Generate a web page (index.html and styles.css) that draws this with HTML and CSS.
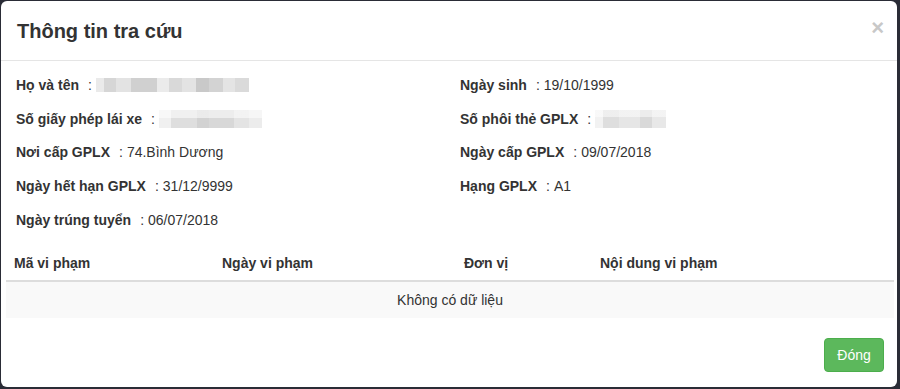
FILE: index.html
```html
<!DOCTYPE html>
<html lang="vi">
<head>
<meta charset="utf-8">
<title>Thông tin tra cứu</title>
<link rel="stylesheet" href="styles.css">
</head>
<body>
<div class="modal">
  <div class="modal-header">
    <h4 class="modal-title">Thông tin tra cứu</h4>
    <span class="close">×</span>
  </div>
  <div class="modal-body">
    <div class="info-grid">
      <div class="info-row"><b>Họ và tên</b><span class="sep">:</span><span class="blur blur-name"></span></div>
      <div class="info-row"><b>Ngày sinh</b><span class="sep">:</span><span class="val">19/10/1999</span></div>
      <div class="info-row"><b>Số giấy phép lái xe</b><span class="sep">:</span><span class="blur blur-gplx"></span></div>
      <div class="info-row"><b>Số phôi thẻ GPLX</b><span class="sep">:</span><span class="blur blur-phoi"></span></div>
      <div class="info-row"><b>Nơi cấp GPLX</b><span class="sep">:</span><span class="val">74.Bình Dương</span></div>
      <div class="info-row"><b>Ngày cấp GPLX</b><span class="sep">:</span><span class="val">09/07/2018</span></div>
      <div class="info-row"><b>Ngày hết hạn GPLX</b><span class="sep">:</span><span class="val">31/12/9999</span></div>
      <div class="info-row"><b>Hạng GPLX</b><span class="sep">:</span><span class="val">A1</span></div>
      <div class="info-row"><b>Ngày trúng tuyển</b><span class="sep">:</span><span class="val">06/07/2018</span></div>
    </div>
    <table class="table">
      <colgroup>
        <col class="c1"><col class="c2"><col class="c3"><col class="c4">
      </colgroup>
      <thead>
        <tr><th>Mã vi phạm</th><th>Ngày vi phạm</th><th>Đơn vị</th><th>Nội dung vi phạm</th></tr>
      </thead>
      <tbody>
        <tr><td colspan="4" class="empty">Không có dữ liệu</td></tr>
      </tbody>
    </table>
  </div>
  <div class="modal-footer">
    <button class="btn-success">Đóng</button>
  </div>
</div>
</body>
</html>
```
FILE: styles.css
```css
html, body {
  margin: 0;
  padding: 0;
}
body {
  background: #2a2c36;
  font-family: "Liberation Sans", Arial, sans-serif;
  color: #333;
  font-size: 14px;
  height: 389px;
  overflow: hidden;
}
.modal {
  margin: 1px 4px 0 1px;
  width: 896px;
  height: 386px;
  background: #fff;
  border-radius: 6px;
  display: flex;
  flex-direction: column;
}
.modal-header {
  height: 59px;
  border-bottom: 1px solid #e5e5e5;
  display: flex;
  align-items: center;
  justify-content: space-between;
  padding: 0 13px 0 16px;
  flex-shrink: 0;
}
.modal-title {
  margin: 0;
  font-size: 20px;
  font-weight: bold;
  color: #333;
  line-height: 28px;
}
.close {
  font-size: 22px;
  font-weight: bold;
  color: #c8c8c8;
  line-height: 1;
  margin-top: -6px;
}
.modal-body {
  padding: 7px 2px 0 5px;
}
.info-grid {
  display: grid;
  grid-template-columns: 444px 1fr;
  grid-auto-rows: 33.75px;
  padding-left: 10px;
}
.info-row {
  display: flex;
  align-items: center;
  white-space: nowrap;
}
.info-row b {
  font-weight: bold;
}
.sep {
  margin-left: 9px;
  margin-right: 4px;
}
.blur {
  display: inline-block;
  filter: blur(0.6px);
}
.blur-name {
  width: 153px;
  height: 14px;
  background: linear-gradient(90deg,
    #eaeaea 0, #eaeaea 8px,
    #d6d6d6 8px, #d6d6d6 20px,
    #e3e3e3 20px, #e3e3e3 35px,
    #d0d0d0 35px, #d0d0d0 61px,
    #ebebeb 61px, #ebebeb 73px,
    #d9d9d9 73px, #d9d9d9 86px,
    #e3e3e3 86px, #e3e3e3 100px,
    #c9c9c9 100px, #c9c9c9 113px,
    #d3d3d3 113px, #d3d3d3 127px,
    #e4e4e4 127px, #e4e4e4 139px,
    #dadada 139px, #dadada 153px);
}
.blur-gplx {
  width: 103px;
  height: 18px;
  background:
    linear-gradient(180deg, rgba(255,255,255,0.55) 0, rgba(255,255,255,0.55) 8px, rgba(255,255,255,0) 8px),
    linear-gradient(90deg,
      #f0f0f0 0, #f0f0f0 12px,
      #dedede 12px, #dedede 38px,
      #d2d2d2 38px, #d2d2d2 50px,
      #d8d8d8 50px, #d8d8d8 75px,
      #e4e4e4 75px, #e4e4e4 90px,
      #ececec 90px, #ececec 103px);
}
.blur-phoi {
  width: 71px;
  height: 18px;
  background:
    linear-gradient(180deg, rgba(255,255,255,0.5) 0, rgba(255,255,255,0.5) 7px, rgba(255,255,255,0) 7px),
    linear-gradient(90deg,
      #f2f2f2 0, #f2f2f2 8px,
      #dedede 8px, #dedede 24px,
      #e6e6e6 24px, #e6e6e6 45px,
      #d9d9d9 45px, #d9d9d9 57px,
      #e8e8e8 57px, #e8e8e8 71px);
}
.table {
  margin-top: 10px;
  width: 888px;
  border-collapse: collapse;
  table-layout: fixed;
}
.c1 { width: 208px; }
.c2 { width: 242px; }
.c3 { width: 136px; }
.c4 { width: 302px; }
.table th {
  text-align: left;
  font-weight: bold;
  height: 34px;
  padding: 0 8px;
  border-bottom: 2px solid #ddd;
  box-sizing: border-box;
  vertical-align: middle;
}
.table td {
  height: 37px;
  padding: 1px 8px 0;
  background: #f9f9f9;
  text-align: center;
  vertical-align: middle;
  box-sizing: border-box;
}
.modal-footer {
  display: flex;
  justify-content: flex-end;
  padding: 20px 13px 0 0;
}
.btn-success {
  width: 60px;
  height: 34px;
  background: #5cb85c;
  border: 1px solid #4cae4c;
  border-radius: 4px;
  color: #fff;
  font-family: "Liberation Sans", Arial, sans-serif;
  font-size: 14px;
  padding: 0;
}
```
